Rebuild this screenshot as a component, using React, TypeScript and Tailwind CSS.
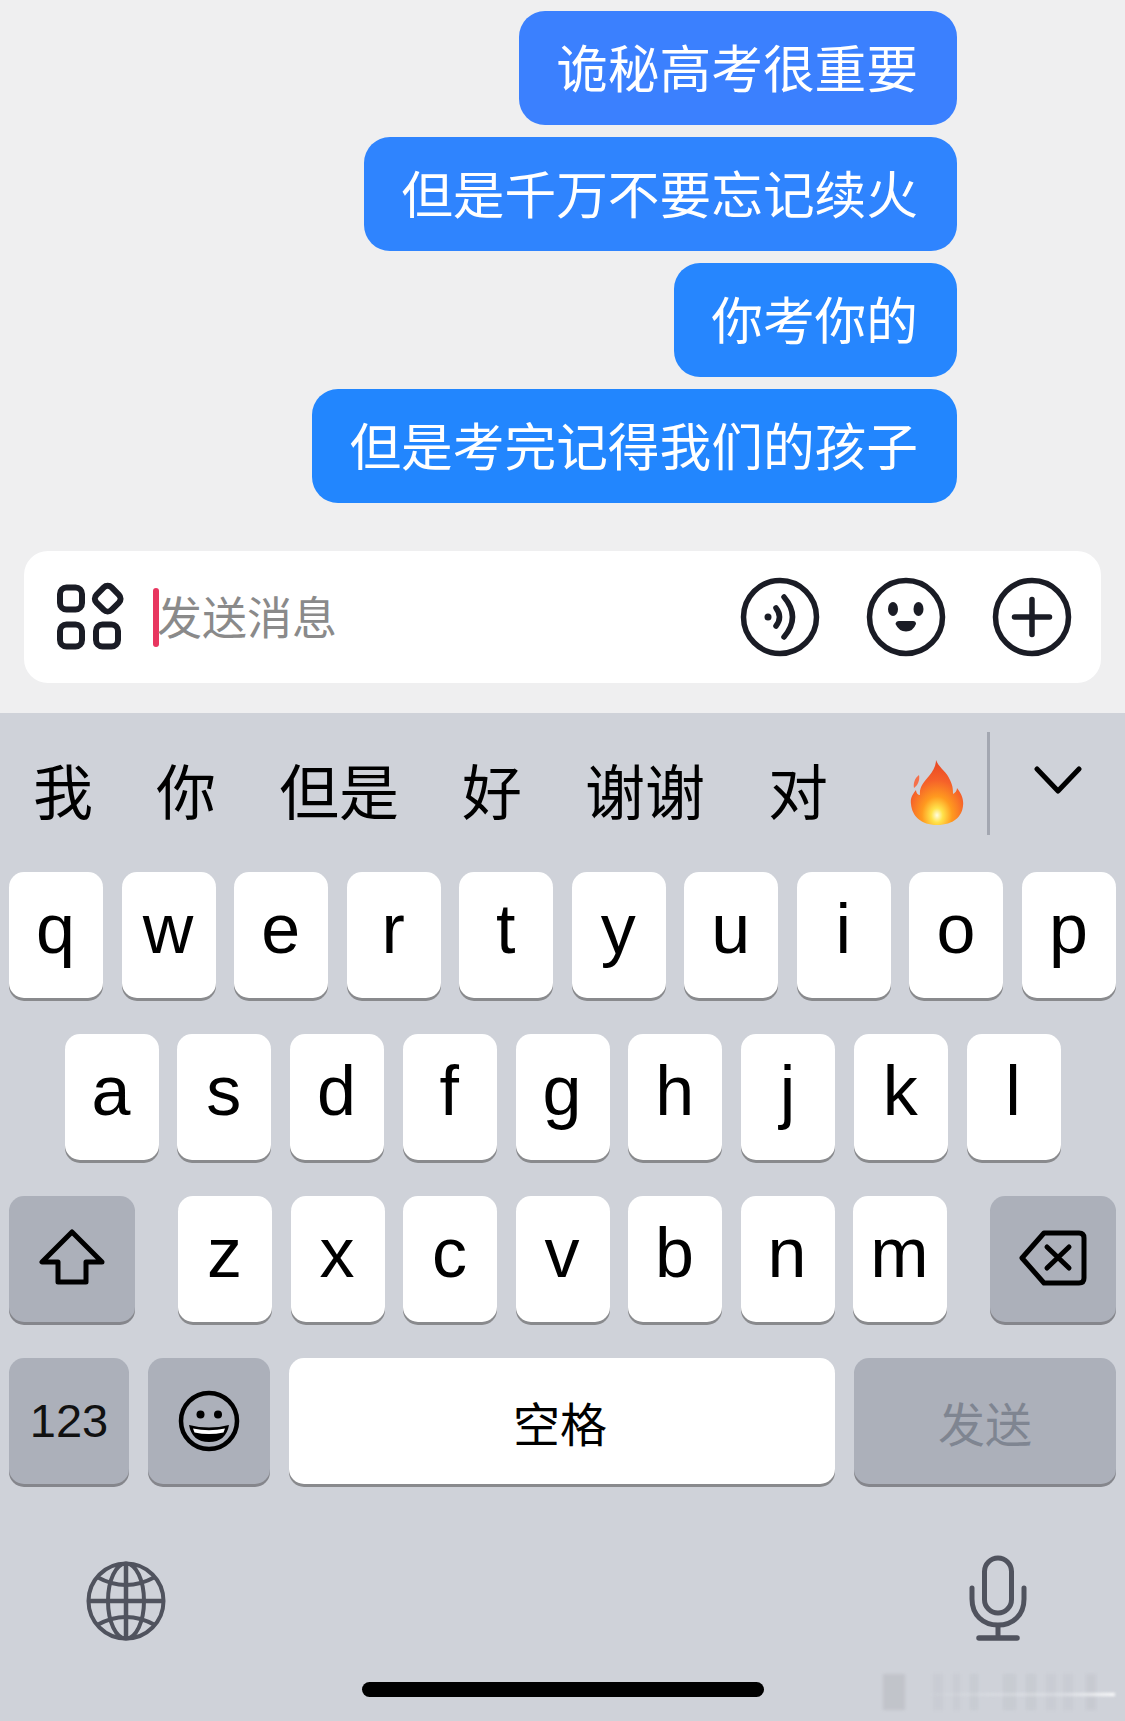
import React from "react";

const cjk = { fontFamily: '"Noto Sans CJK SC", sans-serif' };
const latin = { fontFamily: '"Liberation Sans", Arial, sans-serif' };

function Bubble({ text, color }: { text: string; color: string }) {
  return (
    <div
      className={`flex h-[114px] items-center rounded-[26px] pr-[39px] pb-[4px] pl-[37px] text-[51.7px] leading-none font-normal text-white ${color}`}
      style={cjk}
    >
      {text}
    </div>
  );
}

function Key({ label }: { label: string }) {
  return (
    <div
      className="flex h-[126px] w-[94px] shrink-0 items-center justify-center rounded-[15px] bg-white pr-[1px] pb-[12px] text-[70px] leading-none text-black shadow-[0_3px_0_#898a8d]"
      style={latin}
    >
      {label}
    </div>
  );
}

function AppsIcon() {
  return (
    <svg width="70" height="70" viewBox="0 0 70 70" fill="none" stroke="#1a1c25" strokeWidth="6">
      <rect x="4" y="5.5" width="22" height="22" rx="6.5" />
      <rect x="4" y="42.5" width="22" height="22" rx="6.5" />
      <rect x="40" y="42.5" width="22" height="22" rx="6.5" />
      <rect x="41" y="6" width="21.4" height="21.4" rx="5.5" transform="rotate(45 51.7 16.7)" />
    </svg>
  );
}

function VoiceIcon() {
  return (
    <svg width="80" height="80" viewBox="-40 -40 80 80" fill="none" stroke="#1a1c25" strokeWidth="5.5" strokeLinecap="round">
      <circle r="36.5" />
      <circle cx="-12" cy="0" r="3.5" fill="#1a1c25" stroke="none" />
      <path d="M-4 -9 Q3 0 -4 9" />
      <path d="M4 -20 Q21 0 4 20" />
    </svg>
  );
}

function FaceIcon() {
  return (
    <svg width="80" height="80" viewBox="-40 -40 80 80" fill="none" stroke="#1a1c25" strokeWidth="5.5">
      <circle r="36.5" />
      <ellipse cx="-13" cy="-8" rx="5" ry="7" fill="#1a1c25" stroke="none" />
      <ellipse cx="12.5" cy="-8" rx="5" ry="7" fill="#1a1c25" stroke="none" />
      <path d="M-10.5 7 Q-10 4 -7 4 H7 Q10 4 10 7 Q7 14.5 0 14.5 Q-7 14.5 -10.5 7Z" fill="#1a1c25" stroke="none" />
    </svg>
  );
}

function PlusIcon() {
  return (
    <svg width="80" height="80" viewBox="-40 -40 80 80" fill="none" stroke="#1a1c25" strokeWidth="5.5" strokeLinecap="round">
      <circle r="36.5" />
      <path d="M-17.5 0H17.5M0 -17.5V17.5" />
    </svg>
  );
}

function Fire() {
  return (
    <svg width="56" height="66" viewBox="0 0 56 66">
      <defs>
        <radialGradient id="flame" cx="0.5" cy="0.85" r="0.8">
          <stop offset="0" stopColor="#fffde0" />
          <stop offset="0.14" stopColor="#ffe24a" />
          <stop offset="0.36" stopColor="#ff9a1f" />
          <stop offset="0.68" stopColor="#f5612a" />
          <stop offset="1" stopColor="#ea4a24" />
        </radialGradient>
      </defs>
      <path d="M9 15 C10 20 8 25 4 28 C3 23 5 18 9 15Z" fill="#f5704a" />
      <path
        d="M26 0 C29 8 37 12 40 20 C43 26 43 30 43 34 C45 33 47 31 47 28 C51 33 54 39 53 46 C52 56 44 65 27 65 C11 65 2 56 1 44 C0 38 3 34 6 30 C6 33 8 35 10 35 C9 27 14 22 19 16 C23 11 26 6 26 0Z"
        fill="url(#flame)"
      />
    </svg>
  );
}

function ShiftIcon() {
  return (
    <svg width="66" height="58" viewBox="0 0 66 58" fill="none" stroke="#000" strokeWidth="5" strokeLinejoin="round">
      <path d="M33 3 L3 33 H19 V53 H47 V33 H63 Z" />
    </svg>
  );
}

function DeleteIcon() {
  return (
    <svg width="68" height="56" viewBox="0 0 68 56" fill="none" stroke="#000" strokeWidth="5" strokeLinecap="round" strokeLinejoin="round">
      <path d="M25 3 H60 Q65 3 65 8 V48 Q65 53 60 53 H25 L3 28 Z" />
      <path d="M28 17 L50 38 M50 17 L28 38" />
    </svg>
  );
}

function SmileIcon() {
  return (
    <svg width="62" height="62" viewBox="-31 -31 62 62" fill="none" stroke="#000" strokeWidth="4.5">
      <circle r="28" />
      <circle cx="-8.5" cy="-6.5" r="4" fill="#000" stroke="none" />
      <circle cx="9" cy="-6.5" r="4" fill="#000" stroke="none" />
      <path d="M-20 4 Q0 9 20 4 Q17 21 0 21 Q-17 21 -20 4Z" fill="#000" stroke="none" />
      <path d="M-16 7.5 Q0 11 16 7.5 L14.5 11.5 Q0 14.5 -14.5 11.5Z" fill="#fff" stroke="none" />
    </svg>
  );
}

function GlobeIcon() {
  return (
    <svg width="80" height="80" viewBox="-40 -40 80 80" fill="none" stroke="#50535e" strokeWidth="4">
      <circle r="37.5" />
      <ellipse rx="18" ry="37.5" />
      <path d="M0 -37.5V37.5M-37.5 0H37.5" strokeWidth="4.5" />
      <path d="M-29 -24 Q0 -8 29 -24M-29 24 Q0 8 29 24" />
    </svg>
  );
}

function MicIcon() {
  return (
    <svg width="58" height="88" viewBox="0 0 58 88" fill="none" stroke="#50535e" strokeWidth="5">
      <rect x="15.5" y="3" width="27" height="55" rx="13.5" />
      <path d="M3 33 V44 C3 60 14 70 29 70 C44 70 55 60 55 44 V33" strokeLinecap="round" />
      <path d="M29 70 V82" />
      <path d="M10 83 H48" strokeWidth="5.5" strokeLinecap="round" />
    </svg>
  );
}

function Watermark() {
  const bars = [
    [0, 22, 0.2],
    [50, 10, 0.08],
    [70, 7, 0.08],
    [87, 8, 0.09],
    [120, 13, 0.09],
    [143, 10, 0.09],
    [163, 10, 0.08],
    [180, 10, 0.08],
    [203, 10, 0.1],
  ];
  return (
    <svg className="absolute top-[1673px] left-[883px] blur-[1.5px]" width="236" height="38" viewBox="0 0 236 38">
      <defs>
        <linearGradient id="wm" x1="0" x2="1" y1="0" y2="0">
          <stop offset="0" stopColor="#ffffff" stopOpacity="0" />
          <stop offset="0.7" stopColor="#e8eaee" stopOpacity="0.5" />
          <stop offset="1" stopColor="#ffffff" stopOpacity="1" />
        </linearGradient>
      </defs>
      {bars.map(([x, w, o], i) => (
        <rect key={i} x={x} y="1" width={w} height="36" fill="#8a8c93" opacity={o} />
      ))}
      <rect x="38" y="20" width="194" height="3" fill="url(#wm)" />
    </svg>
  );
}

export default function App() {
  return (
    <div className="relative flex h-[1721px] w-[1125px] flex-col overflow-hidden bg-[#cfd2d9]">
      <div className="flex h-[713px] shrink-0 flex-col bg-[#efeff0]">
        <div className="flex flex-col items-end gap-3 pt-[11px] pr-[168px]">
          <Bubble text="诡秘高考很重要" color="bg-[#3b80fe]" />
          <Bubble text="但是千万不要忘记续火" color="bg-[#2f84fe]" />
          <Bubble text="你考你的" color="bg-[#2686fe]" />
          <Bubble text="但是考完记得我们的孩子" color="bg-[#2286fe]" />
        </div>
        <div className="mx-[24px] mt-[48px] flex h-[132px] items-center rounded-[24px] bg-white pr-[29px] pl-[32px]">
          <AppsIcon />
          <div className="ml-[27px] h-[59px] w-[6px] rounded-full bg-[#e8365f]" />
          <div className="ml-[-2px] flex-1 pb-[4px] text-[45px] leading-none text-[#8a8a8a]" style={cjk}>
            发送消息
          </div>
          <div className="flex gap-[46px]">
            <VoiceIcon />
            <FaceIcon />
            <PlusIcon />
          </div>
        </div>
      </div>

      <div className="flex h-[159px] shrink-0 items-center pl-[33px]">
        <div className="flex gap-[63px] pb-[8px] text-[60px] leading-none text-black" style={cjk}>
          <span>我</span>
          <span>你</span>
          <span>但是</span>
          <span>好</span>
          <span>谢谢</span>
          <span>对</span>
        </div>
        <div className="ml-[82px]">
          <Fire />
        </div>
        <div className="mt-[-18px] ml-[21px] h-[103px] w-[3px] bg-[#a3a7b1]" />
        <svg className="mt-[-25px] ml-[44px]" width="48" height="30" viewBox="0 0 48 30" fill="none" stroke="#000" strokeWidth="5" strokeLinecap="round" strokeLinejoin="round">
          <path d="M3 4 L24 26 L45 4" />
        </svg>
      </div>

      <div className="flex flex-col gap-[36px] px-[9px]">
        <div className="flex justify-between">
          {"qwertyuiop".split("").map((k) => (
            <Key key={k} label={k} />
          ))}
        </div>
        <div className="flex justify-between px-[55.5px]">
          {"asdfghjkl".split("").map((k) => (
            <Key key={k} label={k} />
          ))}
        </div>
        <div className="flex justify-between">
          <div className="flex h-[126px] w-[126px] items-center justify-center rounded-[15px] bg-[#acb0ba] pb-[3px] shadow-[0_3px_0_#85868c]">
            <ShiftIcon />
          </div>
          <div className="flex gap-[18.5px]">
            {"zxcvbnm".split("").map((k) => (
              <Key key={k} label={k} />
            ))}
          </div>
          <div className="flex h-[126px] w-[126px] items-center justify-center rounded-[15px] bg-[#acb0ba] pb-[3px] shadow-[0_3px_0_#85868c]">
            <DeleteIcon />
          </div>
        </div>
        <div className="flex gap-[19px]">
          <div className="flex h-[126px] w-[120px] items-center justify-center rounded-[15px] bg-[#acb0ba] pb-[2px] text-[47px] leading-none text-[#111] shadow-[0_3px_0_#85868c]" style={latin}>
            123
          </div>
          <div className="flex h-[126px] w-[122px] items-center justify-center rounded-[15px] bg-[#acb0ba] shadow-[0_3px_0_#85868c]">
            <SmileIcon />
          </div>
          <div className="flex h-[126px] w-[546px] items-center justify-center rounded-[15px] bg-white pr-[4px] text-[47px] leading-none text-black shadow-[0_3px_0_#898a8d]" style={cjk}>
            空格
          </div>
          <div className="flex h-[126px] w-[262px] items-center justify-center rounded-[15px] bg-[#acb0ba] text-[47px] leading-none text-[#7f8591] shadow-[0_3px_0_#85868c]" style={cjk}>
            发送
          </div>
        </div>
      </div>

      <div className="mt-[71px] flex items-start justify-between pr-[98px] pl-[86px]">
        <div className="pt-[6px]">
          <GlobeIcon />
        </div>
        <MicIcon />
      </div>
      <div className="mt-[39px] ml-[362px] h-[15px] w-[402px] rounded-full bg-black" />
      <Watermark />
    </div>
  );
}
